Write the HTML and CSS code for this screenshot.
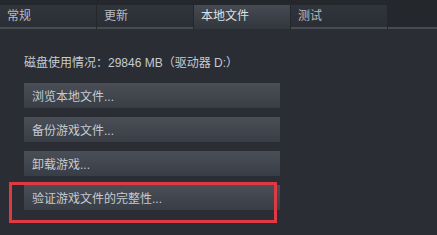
FILE: index.html
```html
<!DOCTYPE html>
<html lang="zh-CN">
<head>
    <meta charset="UTF-8">
    <title>属性 - 本地文件</title>
    <link rel="stylesheet" href="styles.css">
</head>
<body>
    <div class="tabs">
        <div class="tab">常规</div>
        <div class="tab">更新</div>
        <div class="tab active">本地文件</div>
        <div class="tab">测试</div>
        <div class="tab-rest"></div>
    </div>

    <div class="content">
        <p class="disk-usage">磁盘使用情况：29846 MB（驱动器 D:）</p>
        <button class="action-btn">浏览本地文件...</button>
        <button class="action-btn">备份游戏文件...</button>
        <button class="action-btn">卸载游戏...</button>
        <div class="highlight">
            <button class="action-btn">验证游戏文件的完整性...</button>
        </div>
    </div>
</body>
</html>
```

FILE: styles.css
```css
* {
    margin: 0;
    padding: 0;
    box-sizing: border-box;
}

body {
    font-family: "Liberation Sans", "Noto Sans CJK SC", sans-serif;
    font-size: 12px;
    background: #2a2d33;
    color: #c3c8cf;
    width: 437px;
    height: 235px;
    overflow: hidden;
}

.tabs {
    display: flex;
    align-items: flex-end;
    gap: 1px;
    height: 29px;
    padding-top: 5px;
    background: #24272c;
}

.tab {
    width: 96px;
    height: 24px;
    padding-left: 7px;
    line-height: 22px;
    color: #b8bcc2;
    background: linear-gradient(#30343b, #2b2e35);
    border-bottom: 2px solid #474b52;
}

.tab.active {
    color: #dde1e6;
    background: linear-gradient(#464a52, #33373e);
    border-bottom-color: #33373e;
}

.tab-rest {
    flex: 1;
    height: 2px;
    background: #474b52;
}

.content {
    padding: 26px 0 0 24px;
}

.disk-usage {
    line-height: 16px;
    margin-bottom: 12px;
    color: #c6cbd2;
}

.action-btn {
    display: block;
    width: 256px;
    height: 25px;
    margin-bottom: 9px;
    padding-left: 8px;
    text-align: left;
    font-family: inherit;
    font-size: 12px;
    color: #c6cbd2;
    border: none;
    background: linear-gradient(#4a4e57, #393d45);
}

.highlight {
    position: relative;
    width: 256px;
}

.highlight::after {
    content: "";
    position: absolute;
    top: -3px;
    left: -15px;
    right: 3px;
    bottom: -13px;
    border: 3px solid #df3a42;
}
```
